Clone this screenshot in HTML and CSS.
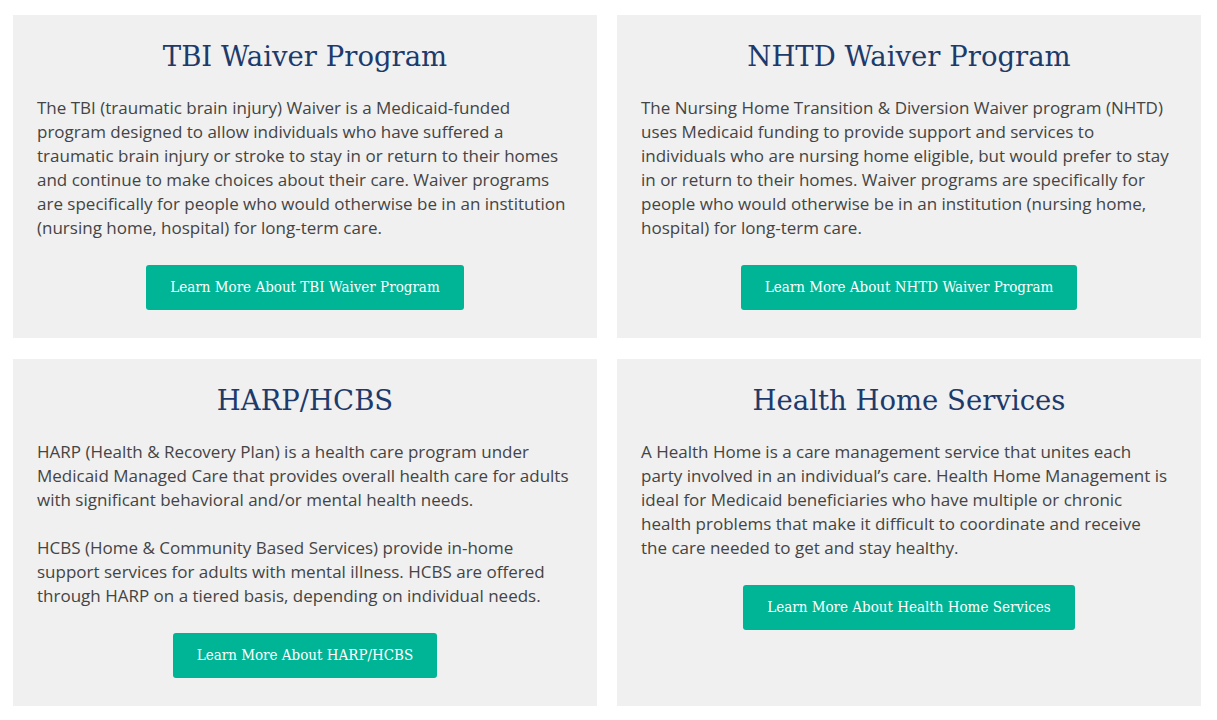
FILE: index.html
```html
<!DOCTYPE html>
<html lang="en">
<head>
<meta charset="utf-8">
<title>Programs</title>
<link rel="stylesheet" href="styles.css">
</head>
<body>
<main class="grid">
  <section class="card">
    <h2 class="card-title">TBI Waiver Program</h2>
    <p class="card-text">The TBI (traumatic brain injury) Waiver is a Medicaid-funded program designed to allow individuals who have suffered a traumatic brain injury or stroke to stay in or return to their homes and continue to make choices about their care. Waiver programs are specifically for people who would otherwise be in an institution (nursing home, hospital) for long-term care.</p>
    <div class="card-action"><a class="btn" href="#">Learn More About TBI Waiver Program</a></div>
  </section>
  <section class="card">
    <h2 class="card-title">NHTD Waiver Program</h2>
    <p class="card-text">The Nursing Home Transition &amp; Diversion Waiver program (NHTD) uses Medicaid funding to provide support and services to individuals who are nursing home eligible, but would prefer to stay in or return to their homes. Waiver programs are specifically for people who would otherwise be in an institution (nursing home, hospital) for long-term care.</p>
    <div class="card-action"><a class="btn" href="#">Learn More About NHTD Waiver Program</a></div>
  </section>
  <section class="card">
    <h2 class="card-title">HARP/HCBS</h2>
    <p class="card-text">HARP (Health &amp; Recovery Plan) is a health care program under Medicaid Managed Care that provides overall health care for adults with significant behavioral and/or mental health needs.</p>
    <p class="card-text">HCBS (Home &amp; Community Based Services) provide in-home support services for adults with mental illness. HCBS are offered through HARP on a tiered basis, depending on individual needs.</p>
    <div class="card-action"><a class="btn" href="#">Learn More About HARP/HCBS</a></div>
  </section>
  <section class="card">
    <h2 class="card-title">Health Home Services</h2>
    <p class="card-text">A Health Home is a care management service that unites each<br>party involved in an individual’s care. Health Home Management is<br>ideal for Medicaid beneficiaries who have multiple or chronic<br>health problems that make it difficult to coordinate and receive<br>the care needed to get and stay healthy.</p>
    <div class="card-action"><a class="btn" href="#">Learn More About Health Home Services</a></div>
  </section>
</main>
</body>
</html>
```
FILE: styles.css
```css
* { box-sizing: border-box; }
body {
  margin: 0;
  background: #ffffff;
  font-family: "Open Sans", "Noto Sans", sans-serif;
}
.grid {
  display: grid;
  grid-template-columns: 584px 584px;
  column-gap: 20px;
  row-gap: 21px;
  padding: 15px 16px 0 13px;
}
.card {
  background: #f0f0f0;
  padding: 24px 24px 28px 24px;
  display: flex;
  flex-direction: column;
}
.card-title {
  margin: 0 0 23px;
  font-family: "DejaVu Serif", serif;
  font-weight: normal;
  font-size: 27.5px;
  line-height: 34px;
  color: #1d3a6b;
  text-align: center;
}
.card-text {
  margin: 0 0 24px;
  font-size: 17px;
  line-height: 24px;
  color: #444444;
}
.card-action {
  margin-top: 1px;
  display: flex;
  justify-content: center;
}
.btn {
  display: inline-block;
  height: 45px;
  line-height: 45px;
  padding: 0 24px;
  background: #00b496;
  color: #ffffff;
  border-radius: 3px;
  text-decoration: none;
  font-family: "DejaVu Serif Condensed", "DejaVu Serif", serif;
  font-size: 15px;
}
```
